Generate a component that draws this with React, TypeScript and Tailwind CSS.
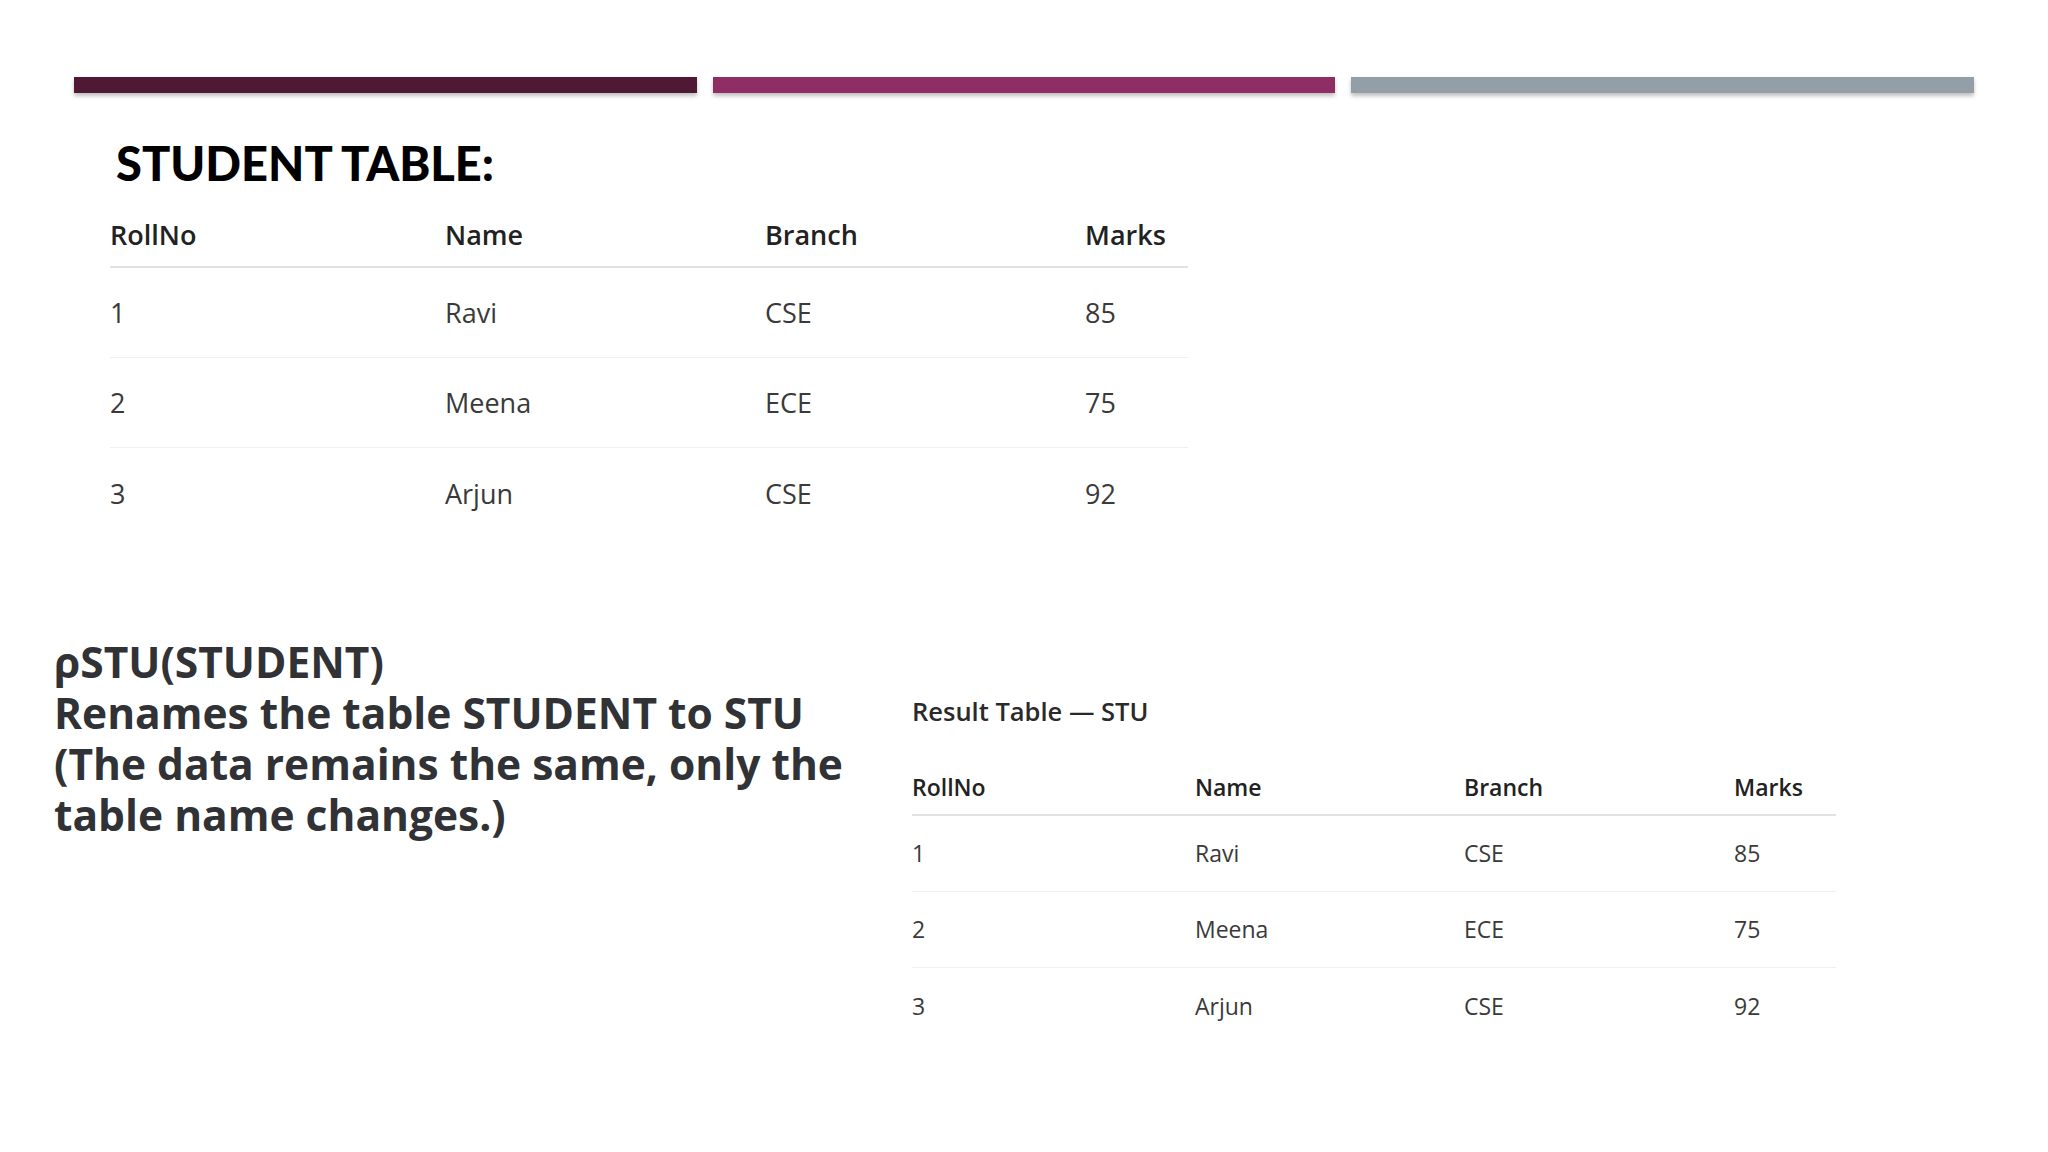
const bars = ["bg-[#4f1935]", "bg-[#8f2e64]", "bg-[#939ea6]"];

const rows = [
  ["1", "Ravi", "CSE", "85"],
  ["2", "Meena", "ECE", "75"],
  ["3", "Arjun", "CSE", "92"],
];

const headers = ["RollNo", "Name", "Branch", "Marks"];

function StudentTable({ big }: { big: boolean }) {
  const cols = big
    ? "grid-cols-[335px_320px_320px_103px]"
    : "grid-cols-[283px_269px_270px_102px]";
  const head = big ? "h-[66px] text-[27px]" : "h-[56px] text-[23px]";
  const row = big ? "h-[90px] text-[27px]" : "h-[76px] text-[23px]";

  return (
    <div className={big ? "w-[1078px]" : "w-[924px]"} style={{ fontFamily: "'Open Sans', sans-serif" }}>
      <div className={`grid ${cols} ${head} items-center border-b-2 border-[#e2e2e2] font-semibold text-[#222]`}>
        {headers.map((h) => (
          <div key={h} className="leading-none">{h}</div>
        ))}
      </div>
      {rows.map((r, i) => (
        <div
          key={r[0]}
          className={`grid ${cols} ${row} items-center text-[#3a3a3a] ${i < rows.length - 1 ? "border-b border-[#efefef]" : ""}`}
        >
          {r.map((c, j) => (
            <div key={j} className="leading-none">{c}</div>
          ))}
        </div>
      ))}
    </div>
  );
}

export default function App() {
  return (
    <div className="w-[2048px] h-[1152px] bg-white overflow-hidden">
      {/* Accent bars */}
      <div className="flex gap-4 px-[74px] pt-[77px]">
        {bars.map((b) => (
          <div key={b} className={`flex-1 h-4 ${b} shadow-[0_3px_4px_rgba(0,0,0,0.25)]`} />
        ))}
      </div>

      <h1
        className="ml-[116px] mt-[46px] text-[47px] leading-[48px] font-black text-black"
        style={{ fontFamily: "Lato, sans-serif" }}
      >
        STUDENT TABLE:
      </h1>

      <div className="ml-[110px] mt-[15px]">
        <StudentTable big />
      </div>

      <div className="flex mt-[98px]">
        <div
          className="w-[912px] pl-[54px] text-[42.5px] leading-[51px] font-bold text-[#303236] whitespace-nowrap"
          style={{ fontFamily: "'Open Sans', sans-serif" }}
        >
          <p>ρSTU(STUDENT)</p>
          <p>Renames the table STUDENT to STU</p>
          <p>(The data remains the same, only the</p>
          <p>table name changes.)</p>
        </div>

        <div className="mt-[58px]">
          <p
            className="text-[25.5px] leading-[34px] font-semibold text-[#2a2a2a]"
            style={{ fontFamily: "'Open Sans', sans-serif" }}
          >
            Result Table — STU
          </p>
          <div className="mt-[32px]">
            <StudentTable big={false} />
          </div>
        </div>
      </div>
    </div>
  );
}
